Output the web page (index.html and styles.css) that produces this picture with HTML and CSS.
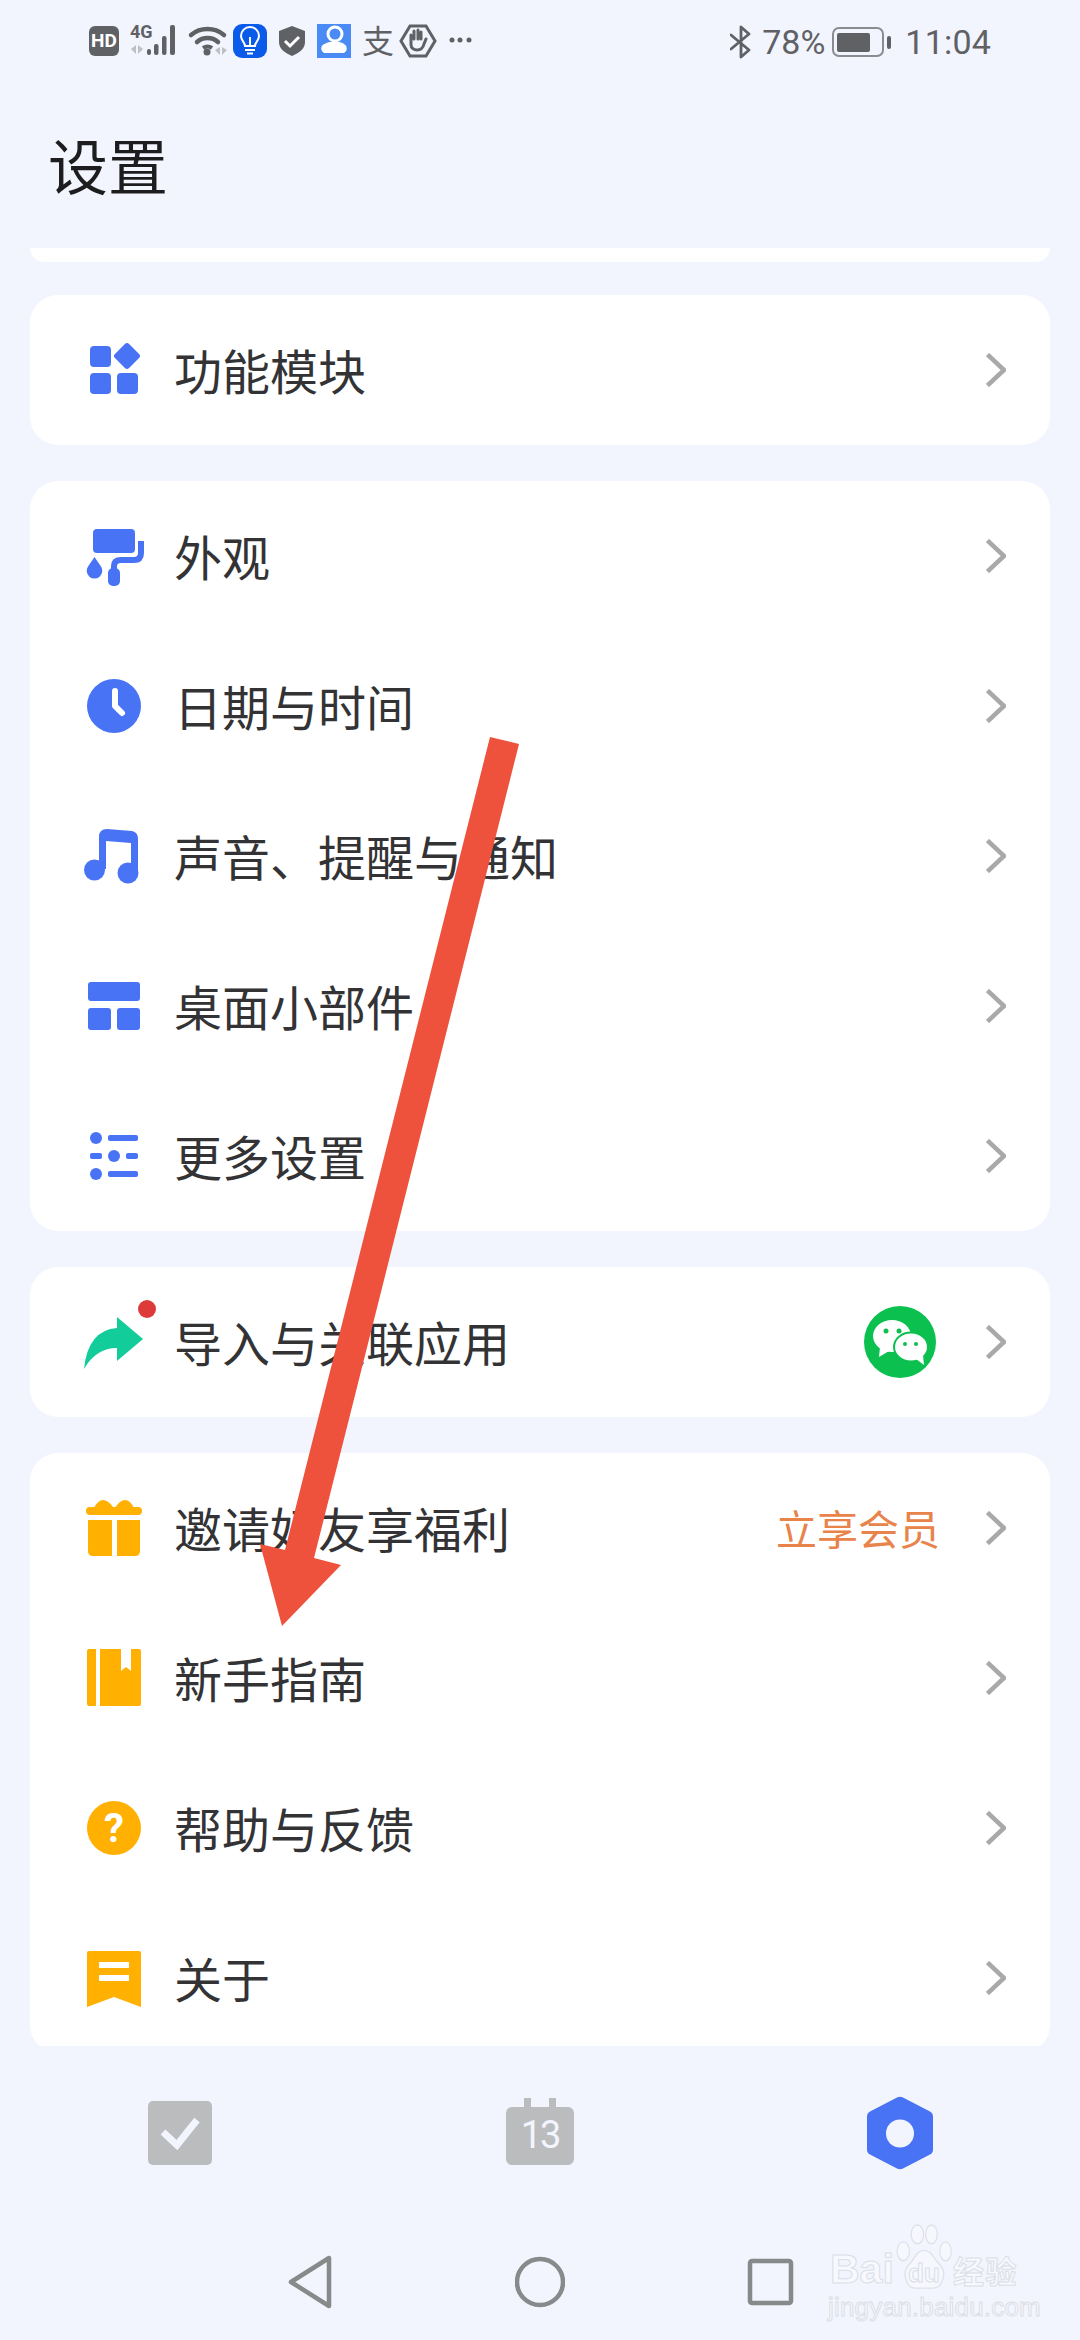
FILE: index.html
```html
<!DOCTYPE html>
<html lang="zh-CN">
<head>
<meta charset="utf-8">
<title>设置</title>
<link rel="stylesheet" href="styles.css">
</head>
<body>
<div class="app">
  <header class="status">
    <svg class="status-icons" width="400" height="84" viewBox="80 0 400 84">
      <rect x="89" y="26" width="30" height="30" rx="6" fill="#606165"/>
      <text class="st-hd" x="104" y="47" text-anchor="middle">HD</text>
      <text class="st-4g" x="130" y="38">4G</text>
      <path d="M131 49l5-4v9zM138 45l5 4-5 5z" fill="#bfc0c3"/>
      <g fill="#606165"><rect x="147" y="49" width="4" height="6" rx="2"/><rect x="154" y="44" width="4.500" height="11" rx="2"/><rect x="162" y="36" width="4.500" height="19" rx="2"/><rect x="170" y="25" width="5" height="30" rx="2"/></g>
      <g fill="none" stroke="#606165" stroke-width="4.500" stroke-linecap="round"><path d="M191 35a26 26 0 0 1 33 0"/><path d="M197 42a16 16 0 0 1 21 0"/></g>
      <path d="M203 48a8 8 0 0 1 9 0" fill="none" stroke="#606165" stroke-width="4"/>
      <circle cx="207" cy="52" r="3.500" fill="#606165"/>
      <path d="M215 50l5-3v8zM222 47l5 3-5 5z" fill="#bfc0c3"/>
      <rect x="233" y="24" width="34" height="34" rx="9" fill="#0b5bea"/>
      <g fill="none" stroke="#fff" stroke-width="2"><path d="M245 46c0-4-4-5-4-10a9 9 0 0 1 18 0c0 5-4 6-4 10z"/><path d="M245 50h10M247 53.500h6M250 46v-9"/></g>
      <path d="M292 26l13 5v11c0 7-6 11-13 14-7-3-13-7-13-14V31z" fill="#606165"/>
      <path d="M285 41l5 5 9-9" fill="none" stroke="#fff" stroke-width="3"/>
      <rect x="317" y="24" width="34" height="34" fill="#4a8af4"/>
      <circle cx="335" cy="34" r="7" fill="none" stroke="#fff" stroke-width="3"/>
      <path d="M324 53a5 5 0 0 1 0-9h1c2-3 17-3 19 0a5 5 0 0 1 0 9z" fill="#fff"/>
      <text class="st-zhi" x="362" y="53">支</text>
      <path d="M410 26h16l9 15-9 15h-16l-9-15z" fill="none" stroke="#606165" stroke-width="3"/>
      <path d="M411 40v-5M414 39v-8M418 39v-9M421 39v-7M411 38v7c0 3 3 5 6 5s6-2 7-6l2-5" fill="none" stroke="#606165" stroke-width="3" stroke-linecap="round"/>
      <g fill="#606165"><circle cx="452" cy="40" r="2.500"/><circle cx="460" cy="40" r="2.500"/><circle cx="469" cy="40" r="2.500"/></g>
    </svg>
    <div class="status-right">
      <svg class="st-bt" width="22" height="34" viewBox="0 0 22 34"><path d="M1 10l18 15-8 7V2l8 7L1 24" fill="none" stroke="#606165" stroke-width="2.800" stroke-linejoin="round" stroke-linecap="round"/></svg>
      <span class="st-pct">78%</span>
      <svg class="st-bat" width="59" height="30" viewBox="0 0 59 30"><rect x="1" y="1" width="50" height="28" rx="6" fill="none" stroke="#8b8c8f" stroke-width="2"/><rect x="5" y="6" width="33" height="19" rx="2" fill="#606165"/><rect x="55" y="9" width="4" height="13" rx="2" fill="#606165"/></svg>
      <span class="st-time">11:04</span>
    </div>
  </header>

  <h1 class="title">设置</h1>

  <main class="scroller">
    <div class="card sliver"></div>

    <section class="card">
      <div class="row">
        <svg class="icon" viewBox="0 0 60 60"><g fill="#4873f5"><rect x="6" y="6" width="21" height="21" rx="4"/><rect x="6" y="33" width="21" height="21" rx="4"/><rect x="33" y="33" width="21" height="21" rx="4"/><rect x="33" y="6" width="20" height="20" rx="3" transform="rotate(45 43 16)"/></g></svg>
        <span class="label">功能模块</span>
        <svg class="chev" viewBox="0 0 20 34"><path d="M1.500 1.500L18 17 1.500 32.500"/></svg>
      </div>
    </section>

    <section class="card">
      <div class="row">
        <svg class="icon" viewBox="0 0 60 60"><g fill="#4873f5"><rect x="9" y="3" width="42" height="24" rx="4"/><rect x="24" y="42" width="12" height="18" rx="5"/><path d="M10.500 31l6.500 9.500a7.800 7.800 0 1 1-13 0z"/></g><path d="M57 15v12q0 7-7 7H37q-7 0-7 6v5" fill="none" stroke="#4873f5" stroke-width="6"/></svg>
        <span class="label">外观</span>
        <svg class="chev" viewBox="0 0 20 34"><path d="M1.500 1.500L18 17 1.500 32.500"/></svg>
      </div>
      <div class="row">
        <svg class="icon" viewBox="0 0 60 60"><circle cx="30" cy="30" r="27" fill="#4873f5"/><path d="M31 15v15l7 7" fill="none" stroke="#fff" stroke-width="6" stroke-linecap="round" stroke-linejoin="round"/></svg>
        <span class="label">日期与时间</span>
        <svg class="chev" viewBox="0 0 20 34"><path d="M1.500 1.500L18 17 1.500 32.500"/></svg>
      </div>
      <div class="row">
        <svg class="icon" viewBox="0 0 60 60"><g fill="#4873f5"><circle cx="10.500" cy="44" r="10.500"/><circle cx="44" cy="47" r="10.500"/><path d="M15 43V11q0-8 8-8l25 2q6 1 6 8v34h-7V17l-25-2v28z"/></g></svg>
        <span class="label">声音、提醒与通知</span>
        <svg class="chev" viewBox="0 0 20 34"><path d="M1.500 1.500L18 17 1.500 32.500"/></svg>
      </div>
      <div class="row">
        <svg class="icon" viewBox="0 0 60 60"><g fill="#4873f5"><rect x="4" y="6" width="52" height="19" rx="3"/><rect x="4" y="32" width="23" height="22" rx="3"/><rect x="33" y="32" width="23" height="22" rx="3"/></g></svg>
        <span class="label">桌面小部件</span>
        <svg class="chev" viewBox="0 0 20 34"><path d="M1.500 1.500L18 17 1.500 32.500"/></svg>
      </div>
      <div class="row">
        <svg class="icon" viewBox="0 0 60 60"><g fill="#4873f5"><circle cx="12" cy="12" r="6"/><rect x="24" y="9" width="30" height="6" rx="2"/><rect x="6" y="27" width="12" height="6" rx="2"/><circle cx="30" cy="30" r="6"/><rect x="42" y="27" width="12" height="6" rx="2"/><circle cx="12" cy="48" r="6"/><rect x="24" y="45" width="30" height="6" rx="2"/></g></svg>
        <span class="label">更多设置</span>
        <svg class="chev" viewBox="0 0 20 34"><path d="M1.500 1.500L18 17 1.500 32.500"/></svg>
      </div>
    </section>

    <section class="card">
      <div class="row">
        <span class="icon-wrap">
          <svg class="icon" viewBox="0 0 60 60"><path d="M33 5l26 22-26 22V36Q12 36 0 57 4 18 33 16z" fill="#12cc9a"/></svg>
          <i class="badge"></i>
        </span>
        <span class="label">导入与关联应用</span>
        <svg class="wechat" viewBox="0 0 72 72"><circle cx="36" cy="36" r="36" fill="#0cc050"/><ellipse cx="28" cy="30" rx="19" ry="16" fill="#fff"/><path d="M16 41l-1 10 10-6z" fill="#fff"/><ellipse cx="47" cy="41" rx="17" ry="14.500" fill="#fff" stroke="#0cc050" stroke-width="2"/><path d="M52 53l8 6-1-10z" fill="#fff"/><g fill="#0cc050"><circle cx="22" cy="25" r="2.500"/><circle cx="35" cy="25" r="2.500"/><circle cx="41" cy="38" r="2"/><circle cx="52" cy="38" r="2"/></g></svg>
        <svg class="chev" viewBox="0 0 20 34"><path d="M1.500 1.500L18 17 1.500 32.500"/></svg>
      </div>
    </section>

    <section class="card">
      <div class="row">
        <svg class="icon" viewBox="0 0 60 60"><g fill="#ffb000"><rect x="2" y="9" width="56" height="8" rx="4"/><path d="M10 10q4-8 9-8t10 7v2H10zM31 10q5-8 10-8t9 8v2H31z"/><path d="M4 22h24v36H9q-5 0-5-5zM33 22h23v31q0 5-5 5H33z"/></g></svg>
        <span class="label">邀请好友享福利</span>
        <span class="promo">立享会员</span>
        <svg class="chev" viewBox="0 0 20 34"><path d="M1.500 1.500L18 17 1.500 32.500"/></svg>
      </div>
      <div class="row">
        <svg class="icon" viewBox="0 0 60 60"><g fill="#ffb000"><path d="M5 1h7v57H5q-2 0-2-2V3q0-2 2-2z"/><path d="M16 1h21v22l5-4 5 4V1h8q2 0 2 2v53q0 2-2 2H16z"/></g></svg>
        <span class="label">新手指南</span>
        <svg class="chev" viewBox="0 0 20 34"><path d="M1.500 1.500L18 17 1.500 32.500"/></svg>
      </div>
      <div class="row">
        <svg class="icon" viewBox="0 0 60 60"><circle cx="30" cy="30" r="27" fill="#ffb000"/><text class="q" x="30" y="44" text-anchor="middle">?</text></svg>
        <span class="label">帮助与反馈</span>
        <svg class="chev" viewBox="0 0 20 34"><path d="M1.500 1.500L18 17 1.500 32.500"/></svg>
      </div>
      <div class="row">
        <svg class="icon" viewBox="0 0 60 60"><path d="M3 5q0-2 2-2h50q2 0 2 2v54L30 49 3 59z" fill="#ffb000"/><rect x="15" y="14" width="30" height="6" fill="#fff"/><rect x="15" y="27" width="30" height="6" fill="#fff"/></svg>
        <span class="label">关于</span>
        <svg class="chev" viewBox="0 0 20 34"><path d="M1.500 1.500L18 17 1.500 32.500"/></svg>
      </div>
    </section>
  </main>

  <nav class="tabs">
    <svg class="tab" viewBox="0 0 80 80"><rect x="8" y="7" width="64" height="64" rx="5" fill="#bbbcbe"/><path d="M23 38l14 13L57 26" fill="none" stroke="#f2f5fe" stroke-width="7"/></svg>
    <svg class="tab" viewBox="0 0 80 80"><g fill="#bbbcbe"><rect x="6" y="13" width="68" height="58" rx="6"/><rect x="24" y="4" width="7" height="12"/><rect x="49" y="4" width="7" height="12"/></g><text class="cal" x="40" y="54" text-anchor="middle">13</text></svg>
    <svg class="tab" viewBox="0 0 80 80"><path d="M37 3.500q3-1.500 6 0L70 17.500q3 1.500 3 5V55.500q0 3.500-3 5L43 74.500q-3 1.500-6 0L10 60.500q-3-1.500-3-5V22.500q0-3.500 3-5z" fill="#4873f5"/><circle cx="40" cy="39.500" r="14" fill="#f2f5fe"/></svg>
  </nav>

  <footer class="sysnav">
    <svg class="sysicon" viewBox="0 0 50 54"><path d="M44 3v48L6 27z" fill="none" stroke="#88898b" stroke-width="4.500" stroke-linejoin="round"/></svg>
    <svg class="sysicon" viewBox="0 0 50 54"><circle cx="25" cy="27" r="23" fill="none" stroke="#88898b" stroke-width="4.500"/></svg>
    <svg class="sysicon" viewBox="0 0 50 54"><rect x="5" y="6" width="41" height="42" rx="2" fill="none" stroke="#88898b" stroke-width="4.500"/></svg>
  </footer>

  <svg class="arrow" viewBox="0 0 1080 2340"><path d="M490 737L519 744 314 1558 341 1565 282 1626 260 1544 285 1550z" fill="#ee523c"/></svg>

  <div class="watermark">
    <svg class="paw" viewBox="0 0 70 70" preserveAspectRatio="none"><g fill="#f6f8fe" stroke="#dfe1e8" stroke-width="1.500"><ellipse cx="10" cy="29" rx="7.500" ry="10"/><ellipse cx="27" cy="11" rx="7.500" ry="10"/><ellipse cx="44" cy="11" rx="7" ry="10"/><ellipse cx="61" cy="29" rx="7" ry="10"/><path d="M35 28c10 0 12 10 20 16 8 8 2 24-9 24H24c-10 0-16-16-8-24 8-6 9-16 19-16z"/></g></svg>
    <span class="wm-bai">Bai</span>
    <span class="wm-du">du</span>
    <span class="wm-jy">经验</span>
    <span class="wm-url">jingyan.baidu.com</span>
  </div>
</div>
</body>
</html>
```
FILE: styles.css
```css
* { box-sizing: border-box; }
html, body { margin: 0; padding: 0; }
body { background: #f2f5fe; font-family: "Noto Sans CJK SC", "Noto Sans", sans-serif; }

.app {
  position: relative;
  width: 1080px;
  height: 2340px;
  display: flex;
  flex-direction: column;
  overflow: hidden;
  background: #f2f5fe;
}

/* status bar */
.status {
  height: 84px;
  flex: none;
  display: flex;
  justify-content: space-between;
  align-items: center;
  padding: 0 89px 0 80px;
  color: #606165;
}
.status-icons { display: block; flex: none; }
.status-right { display: flex; align-items: center; height: 84px; }
.st-bt { margin-right: 10px; }
.st-pct { font: 400 34px/1 "Roboto", sans-serif; margin-right: 7px; }
.st-bat { margin-right: 14px; }
.st-time { font: 400 34px/1 "Roboto", sans-serif; letter-spacing: 0.2px; }
.st-hd { font: 700 19px "Roboto", sans-serif; fill: #fff; }
.st-4g { font: 700 18px "Roboto", sans-serif; fill: #606165; }
.st-zhi { font: 400 32px "Noto Sans CJK SC", sans-serif; fill: #606165; }

/* title */
.title {
  flex: none;
  height: 164px;
  margin: 0;
  padding: 0 0 0 48px;
  font-size: 60px;
  font-weight: 400;
  line-height: 160px;
  color: #1d1d1f;
}

/* list */
.scroller {
  flex: none;
  height: 1798px;
  overflow: hidden;
  padding: 0 30px;
  display: flex;
  flex-direction: column;
  gap: 36px;
}
.card { flex: none; background: #fff; border-radius: 28px; }
.sliver { height: 14px; margin-bottom: -3px; border-radius: 0 0 28px 28px; }

.row {
  height: 150px;
  display: flex;
  align-items: center;
  padding: 0 44px 0 54px;
}
.icon { width: 60px; height: 60px; flex: none; display: block; overflow: visible; }
.icon-wrap { position: relative; width: 60px; height: 60px; flex: none; }
.badge {
  position: absolute;
  left: 54px;
  top: -12px;
  width: 18px;
  height: 18px;
  border-radius: 50%;
  background: #dd3b3a;
}
.label {
  flex: 1;
  margin-left: 30px;
  padding-bottom: 3px;
  font-size: 48px;
  line-height: 60px;
  color: #333335;
  white-space: nowrap;
}
.promo { font-size: 41px; line-height: 60px; padding-bottom: 3px; color: #e8834a; margin-right: 46px; }
.wechat { width: 72px; height: 72px; flex: none; margin-right: 50px; }
.chev { width: 20px; height: 34px; flex: none; }
.chev path { fill: none; stroke: #a9a9ab; stroke-width: 4.5; }
.q { font: 700 40px "Roboto", sans-serif; fill: #fff; }

/* bottom tabs */
.tabs {
  flex: none;
  height: 176px;
  display: grid;
  grid-template-columns: repeat(3, 1fr);
  justify-items: center;
  padding-top: 48px;
  width: 1080px;
}
.tab { width: 80px; height: 80px; display: block; }
.cal { font: 400 38px "Roboto", sans-serif; letter-spacing: -2px; fill: #f2f5fe; }

/* system navigation */
.sysnav {
  flex: none;
  height: 118px;
  display: flex;
  justify-content: center;
  gap: 180px;
  padding-top: 33px;
}
.sysicon { width: 50px; height: 54px; display: block; }

/* annotation overlay */
.arrow { position: absolute; left: 0; top: 0; width: 1080px; height: 2340px; pointer-events: none; }

/* watermark */
.watermark { position: absolute; left: 828px; top: 2224px; width: 200px; height: 96px; }
.watermark span { position: absolute; color: #f7f9fe; -webkit-text-stroke: 1px #dcdee6; white-space: nowrap; }
.paw { position: absolute; left: 67px; top: 0; width: 58px; height: 66px; }
.wm-bai { left: 2px; top: 25px; font: 700 41px/40px "Liberation Sans", sans-serif; }
.wm-du { left: 80px; top: 36px; font: 700 26px/26px "Liberation Sans", sans-serif; }
.wm-jy { left: 125px; top: 30px; font: 700 31px/32px "Noto Sans CJK SC", sans-serif; letter-spacing: 1.500px; }
.wm-url { left: 0; top: 70px; font: 400 26px/26px "Liberation Sans", sans-serif; letter-spacing: 0.2px; }
```
